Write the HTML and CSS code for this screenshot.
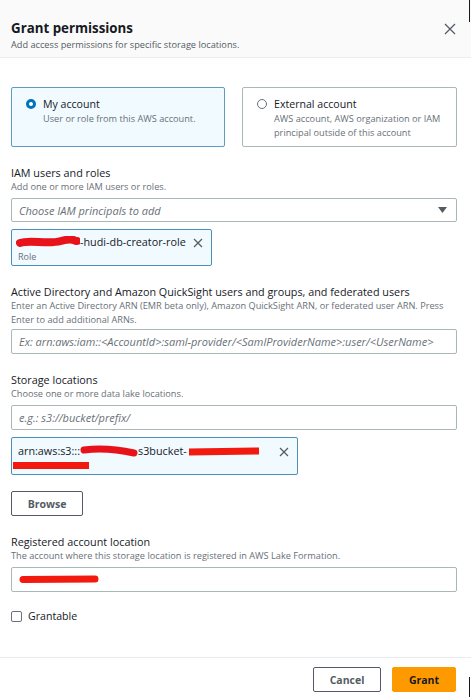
FILE: index.html
```html
<!DOCTYPE html>
<html>
<head>
<meta charset="utf-8">
<link rel="stylesheet" href="styles.css">
</head>
<body>
<div class="modal">
  <div class="header">
    <div class="titles">
      <h1 class="title">Grant permissions</h1>
      <p class="subtitle">Add access permissions for specific storage locations.</p>
    </div>
    <svg class="close" width="12" height="12" viewBox="0 0 12 12"><path d="M1 1 L11 11 M11 1 L1 11" stroke="#545b64" stroke-width="1.3" fill="none"/></svg>
  </div>

  <div class="body">
    <div class="tiles">
      <div class="tile selected">
        <span class="radio on"></span>
        <div>
          <div class="tile-title">My account</div>
          <div class="tile-desc">User or role from this AWS account.</div>
        </div>
      </div>
      <div class="tile">
        <span class="radio"></span>
        <div>
          <div class="tile-title">External account</div>
          <div class="tile-desc">AWS account, AWS organization or IAM principal outside of this account</div>
        </div>
      </div>
    </div>

    <div class="field first">
      <div class="label">IAM users and roles</div>
      <div class="desc">Add one or more IAM users or roles.</div>
      <div class="input select">
        <span class="placeholder">Choose IAM principals to add</span>
        <svg class="caret" width="9" height="6" viewBox="0 0 9 6"><path d="M0 0 H9 L4.5 6 Z" fill="#545b64"/></svg>
      </div>
      <div class="token token-role">
        <div class="token-main">
          <div class="token-line"><svg class="scribble" width="64" height="12" viewBox="0 0 64 12"><path d="M4 7 C15 3 30 9 45 5 S58 6 61 5" stroke="#e8121a" stroke-width="8" stroke-linecap="round" fill="none"/></svg>-hudi-db-creator-role</div>
          <div class="token-sub">Role</div>
        </div>
        <svg class="token-x" width="10" height="10" viewBox="0 0 10 10"><path d="M1 1 L9 9 M9 1 L1 9" stroke="#545b64" stroke-width="1.2" fill="none"/></svg>
      </div>
    </div>

    <div class="field">
      <div class="label">Active Directory and Amazon QuickSight users and groups, and federated users</div>
      <div class="desc">Enter an Active Directory ARN (EMR beta only), Amazon QuickSight ARN, or federated user ARN. Press<br>Enter to add additional ARNs.</div>
      <div class="input tight">
        <span class="placeholder">Ex: arn:aws:iam::&lt;AccountId&gt;:saml-provider/&lt;SamlProviderName&gt;:user/&lt;UserName&gt;</span>
      </div>
    </div>

    <div class="field">
      <div class="label">Storage locations</div>
      <div class="desc">Choose one or more data lake locations.</div>
      <div class="input">
        <span class="placeholder">e.g.: s3://bucket/prefix/</span>
      </div>
      <div class="token token-loc">
        <div class="token-main">
          <div class="token-line">arn:aws:s3:::<svg class="scribble" width="58" height="12" viewBox="0 0 58 12"><path d="M4 5 C20 3 40 5 54 8" stroke="#e8121a" stroke-width="7" stroke-linecap="round" fill="none"/></svg>s3bucket-<svg class="scribble" width="74" height="12" viewBox="0 0 74 12"><path d="M2 7 L72 6" stroke="#f21a0f" stroke-width="7" fill="none"/></svg></div>
          <div class="token-line2"><svg width="76" height="9" viewBox="0 0 76 9"><path d="M0 4.5 L76 4.5" stroke="#f21a0f" stroke-width="7" fill="none"/></svg></div>
        </div>
        <svg class="token-x" width="10" height="10" viewBox="0 0 10 10"><path d="M1 1 L9 9 M9 1 L1 9" stroke="#545b64" stroke-width="1.2" fill="none"/></svg>
      </div>
      <button class="btn browse">Browse</button>
    </div>

    <div class="field">
      <div class="label">Registered account location</div>
      <div class="desc">The account where this storage location is registered in AWS Lake Formation.</div>
      <div class="input">
        <svg class="scribble" width="80" height="9" viewBox="0 0 80 9"><path d="M4 4.5 L76 4" stroke="#f21a0f" stroke-width="7" stroke-linecap="round" fill="none"/></svg>
      </div>
    </div>

    <label class="check">
      <span class="box"></span>
      <span class="check-text">Grantable</span>
    </label>
  </div>

  <div class="footer">
    <button class="btn cancel">Cancel</button>
    <button class="btn primary">Grant</button>
  </div>

  <span class="edge edge-top"></span>
  <span class="edge edge-bottom"></span>
</div>
</body>
</html>
```

FILE: styles.css
```css
* { box-sizing: border-box; }

html, body {
  margin: 0;
  padding: 0;
}

body {
  width: 471px;
  height: 697px;
  background: #ffffff;
  font-family: "Open Sans", "Noto Sans", sans-serif;
  color: #16191f;
  overflow: hidden;
}

.modal {
  position: relative;
  width: 471px;
  height: 697px;
  display: flex;
  flex-direction: column;
  background: #ffffff;
}

.header {
  display: flex;
  justify-content: space-between;
  align-items: flex-start;
  padding: 18px 15px 0 11px;
  height: 58px;
  background: #fafafa;
  border-bottom: 1px solid #eaeded;
}

.title {
  margin: 0;
  font-size: 13.3px;
  line-height: 20px;
  font-weight: 700;
}

.subtitle {
  margin: 0;
  font-size: 9.2px;
  line-height: 14px;
  color: #545b64;
}

.close {
  margin-top: 5px;
}

.body {
  flex: 1;
  padding: 29px 14px 0 11px;
  display: flex;
  flex-direction: column;
}

.tiles {
  display: grid;
  grid-template-columns: 214px 215px;
  column-gap: 17px;
}

.tile {
  height: 60px;
  border: 1px solid #aab7b8;
  border-radius: 2px;
  display: flex;
  align-items: flex-start;
  gap: 7px;
  padding: 8px 10px 0 14px;
}

.tile.selected {
  background: #f1faff;
  border-color: #5f9cc4;
}

.radio {
  flex: none;
  width: 10px;
  height: 10px;
  margin-top: 3px;
  border-radius: 50%;
  border: 1px solid #687078;
  background: #fff;
}

.radio.on {
  border: 3px solid #0073bb;
}

.tile-title {
  font-size: 10.6px;
  line-height: 16px;
}

.tile-desc {
  font-size: 9.2px;
  line-height: 13.5px;
  color: #687078;
}

.field {
  display: flex;
  flex-direction: column;
  align-items: flex-start;
  margin-top: 18px;
}

.label {
  font-size: 10.8px;
  line-height: 15px;
}

.desc {
  font-size: 9.2px;
  line-height: 14px;
  color: #687078;
  white-space: nowrap;
}

.input {
  align-self: stretch;
  height: 25px;
  margin-top: 4px;
  border: 1px solid #aab7b8;
  border-radius: 2px;
  display: flex;
  align-items: center;
  padding: 0 7px;
  background: #fff;
}

.input.tight {
  margin-top: 2px;
}

.select {
  justify-content: space-between;
  height: 24px;
  padding-right: 9px;
}

.placeholder {
  font-style: italic;
  font-size: 11px;
  color: #687078;
  white-space: nowrap;
}

.token {
  margin-top: 7px;
  background: #f1faff;
  border: 1px solid #4d8eb8;
  border-radius: 2px;
  display: flex;
  align-items: flex-start;
  justify-content: space-between;
}

.token-role {
  width: 201px;
  height: 37px;
  padding: 4px 8px 0 4px;
}

.token-loc {
  width: 287px;
  height: 38px;
  padding: 5px 8px 0 1px;
}

.token-line {
  font-size: 10.8px;
  line-height: 16px;
  white-space: nowrap;
  display: flex;
  align-items: center;
}

.token-loc .token-line {
  padding-left: 5px;
}

.token-line2 {
  height: 12px;
  display: flex;
  align-items: center;
}

.token-sub {
  font-size: 9px;
  line-height: 14px;
  color: #687078;
  padding-left: 2px;
}

.token-x {
  margin-top: 4px;
}

.scribble {
  display: block;
}

.btn {
  font-family: "Open Sans", "Noto Sans", sans-serif;
  font-weight: 700;
  font-size: 10.5px;
  border-radius: 2px;
  padding: 0;
  cursor: pointer;
}

.browse {
  margin-top: 16px;
  width: 72px;
  height: 25px;
  background: #fff;
  border: 1px solid #545b64;
  color: #545b64;
}

.check {
  margin-top: 16px;
  display: flex;
  align-items: center;
  gap: 6px;
  height: 16px;
}

.box {
  width: 11px;
  height: 11px;
  border: 1px solid #687078;
  border-radius: 2px;
  background: #fff;
}

.check-text {
  font-size: 10.6px;
}

.footer {
  height: 40px;
  border-top: 1px solid #eaeded;
  display: flex;
  justify-content: flex-end;
  align-items: flex-start;
  gap: 11px;
  padding: 9px 15px 0 0;
}

.cancel {
  width: 68px;
  height: 25px;
  background: #fff;
  border: 1px solid #545b64;
  color: #545b64;
}

.primary {
  width: 64px;
  height: 25px;
  background: #ff9900;
  border: 1px solid #ff9900;
  color: #16191f;
}

.edge {
  position: absolute;
  right: 1px;
  width: 1px;
  background: #16191f;
}

.edge-top {
  top: 0;
  height: 22px;
}

.edge-bottom {
  bottom: 0;
  height: 20px;
}
```
